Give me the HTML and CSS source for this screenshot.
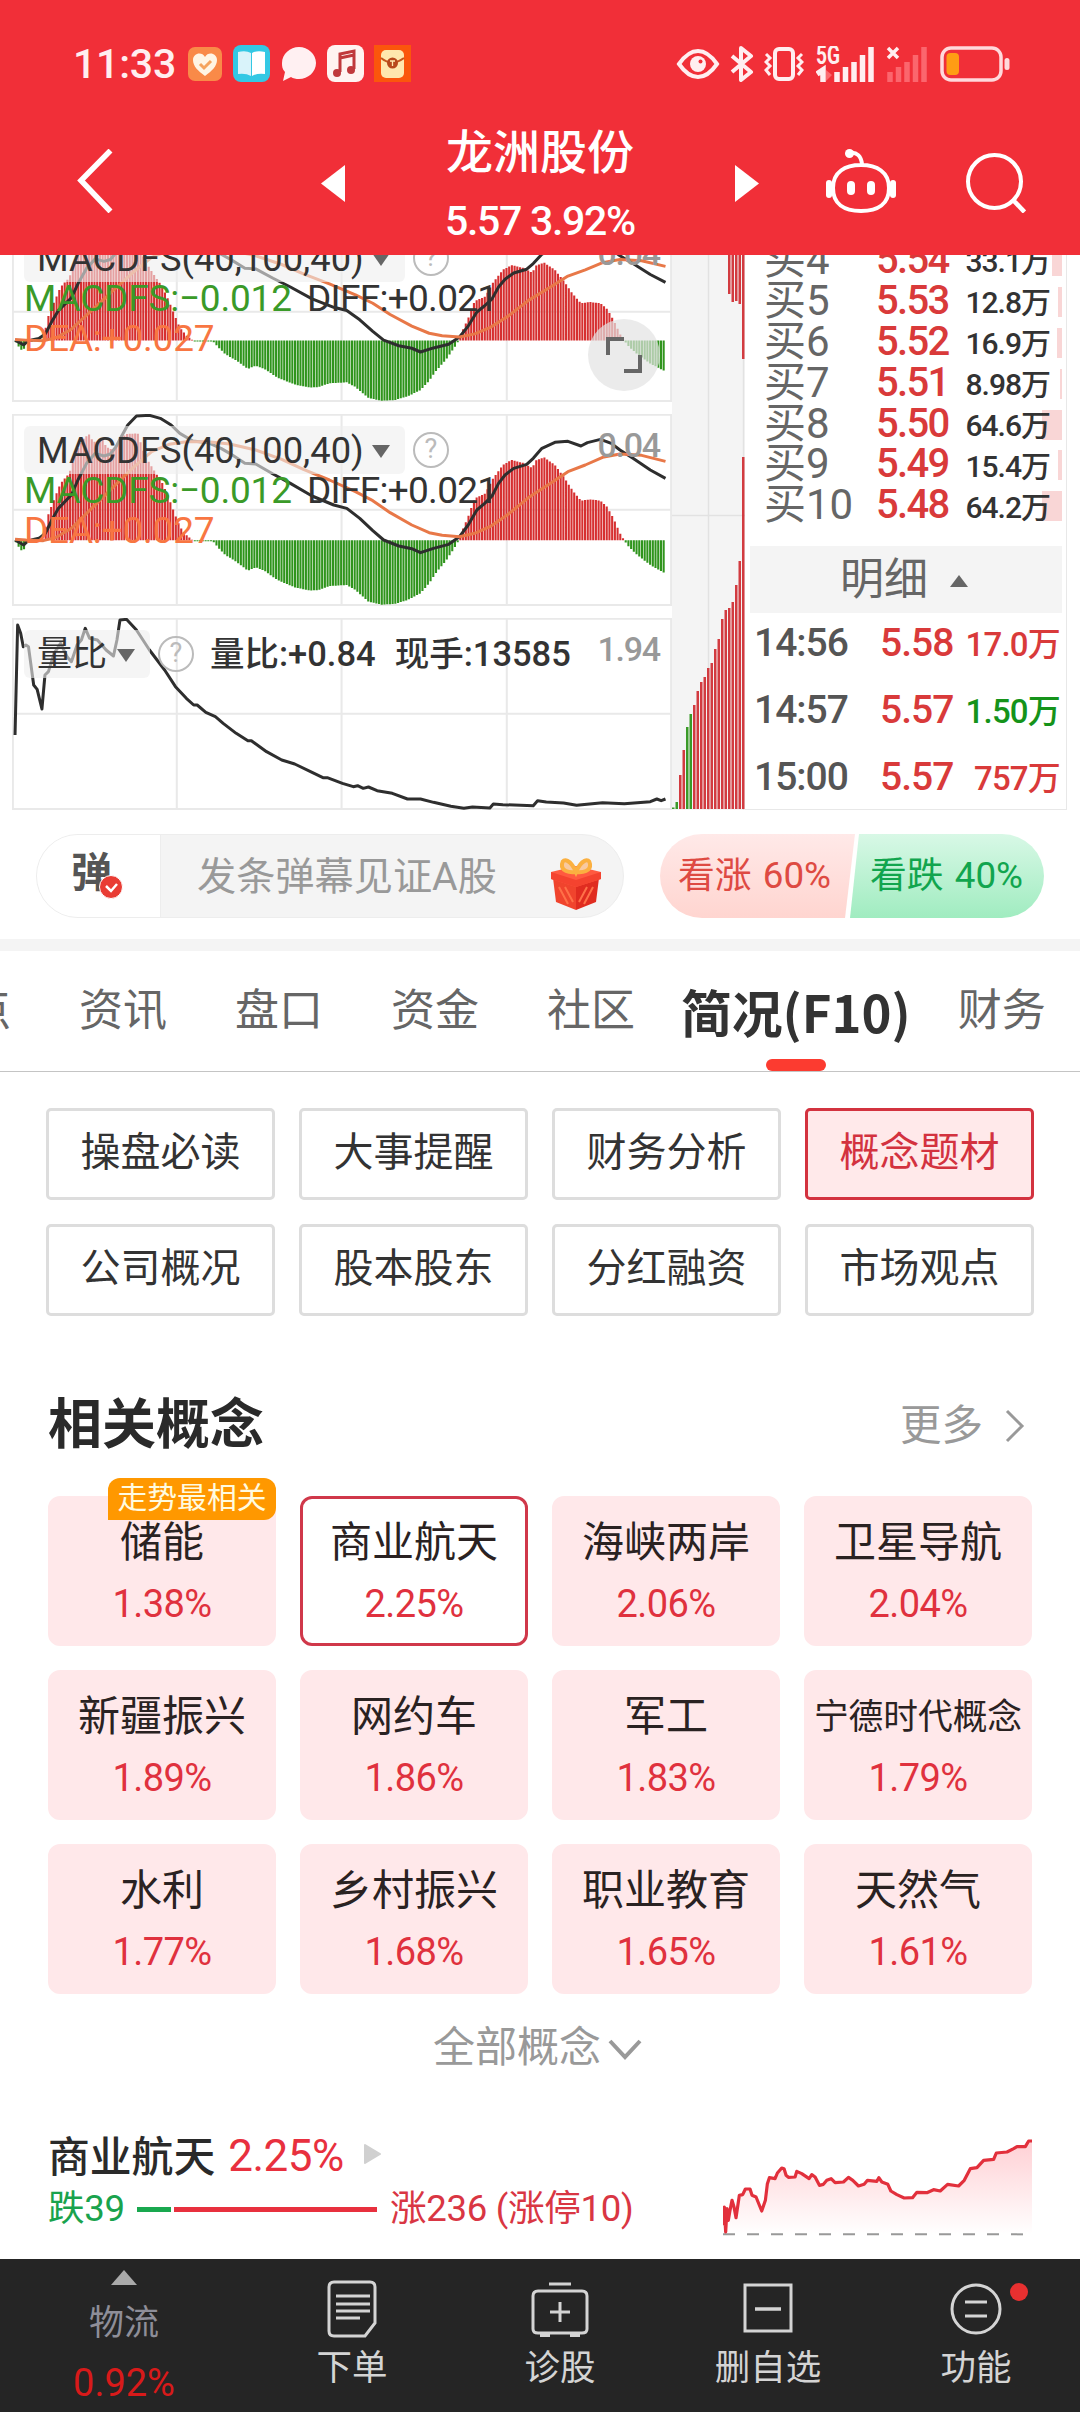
FILE: index.html
```html
<!DOCTYPE html>
<html lang="zh-CN">
<head>
  <meta charset="UTF-8">
  <meta name="viewport" content="width=device-width, initial-scale=1.0">
  <title>龙洲股份</title>
  <link rel="stylesheet" href="styles.css">
</head>
<body>
  <header class="header">
    <div class="status">
      <span class="clock">11:33</span>
      <svg class="app-heart" width="34" height="34" viewBox="0 0 34 34"><rect width="34" height="34" rx="7" fill="#f98a48"/><path d="M17 29C10 24 5 19 5 13c0-7 9-9 12-3 3-6 12-4 12 3 0 6-5 11-12 16z" fill="#fff5e4"/><path d="M12 17l4 4 7-7" fill="none" stroke="#f5a35c" stroke-width="3"/></svg>
      <svg class="app-book" width="37" height="37" viewBox="0 0 37 37"><rect width="37" height="37" rx="8" fill="#33c8e4"/><path d="M5 7q8-2 13 1v23q-5-3-13-2z" fill="#d9f3fa"/><path d="M32 7q-8-2-13 1v23q5-3 13-2z" fill="#fff"/></svg>
      <svg class="app-chat" width="36" height="36" viewBox="0 0 36 36"><path d="M18 1c9 0 17 7 17 16s-8 16-17 16c-3 0-6-.5-8-2l-8 4 2-9C1 23 1 20 1 17 1 8 9 1 18 1z" fill="#fff0f2"/></svg>
      <svg class="app-music" width="37" height="37" viewBox="0 0 37 37"><rect width="37" height="37" rx="8" fill="#fff3f1"/><path d="M13 27V9l14-3v18M13 13l14-3" fill="none" stroke="#c0393c" stroke-width="3"/><circle cx="10" cy="28" r="4" fill="#c0393c"/><circle cx="24" cy="25" r="4" fill="#c0393c"/></svg>
      <svg width="37" height="37" viewBox="0 0 37 37"><rect width="37" height="37" fill="#fb560c"/><rect x="7" y="5" width="23" height="28" rx="5" fill="#ffe7ae"/><path d="M7 13q11 9 23 0" fill="none" stroke="#c4561c" stroke-width="2"/><circle cx="18.500" cy="18" r="5.500" fill="#b8481b"/><path d="M16 16h5M18.500 16v5" stroke="#ffe7ae" stroke-width="1.300"/></svg>
      <div class="system">
        <svg width="44" height="36" viewBox="0 0 44 36"><path d="M3 18Q12 5 22 5t19 13Q32 31 22 31T3 18z" fill="none" stroke="#ffeef0" stroke-width="4"/><circle cx="22" cy="18" r="8" fill="#ffeef0"/><circle cx="24.500" cy="15.500" r="2" fill="#f12f38"/></svg>
        <svg class="bt" width="24" height="36" viewBox="0 0 24 36"><path d="M2 10l19 16-10 8V2l10 8L2 26" fill="none" stroke="#ffeef0" stroke-width="4" stroke-linejoin="round"/></svg>
        <svg class="vib" width="40" height="36" viewBox="0 0 40 36"><rect x="11" y="3" width="18" height="30" rx="4" fill="none" stroke="#ffeef0" stroke-width="4"/><path d="M2 8l4 4-4 4 4 4-4 4 4 5M38 8l-4 4 4 4-4 4 4 4-4 5" fill="none" stroke="#ffeef0" stroke-width="3"/></svg>
        <svg class="sig" width="59" height="36" viewBox="0 0 59 36"><text x="0" y="18" class="sig-text" textLength="24" lengthAdjust="spacingAndGlyphs">5G</text><path d="M1 28l6-4v12M21 26v10M29.500 21v15M38 16v20M46.500 9v27M55 1v35" fill="none" stroke="#ffeef0" stroke-width="5.500"/><path d="M10 24l6 5-6 6z" fill="#fb6a70"/></svg>
        <svg class="sig2" width="42" height="36" viewBox="0 0 42 36"><path d="M2 2l10 10M12 2L2 12" stroke="#ffeef0" stroke-width="3.500"/><path d="M4 26v10M12.500 21v15M21 16v20M29.500 9v27M38 1v35" stroke="#fb666d" stroke-width="5.500"/></svg>
        <svg class="bat" width="70" height="36" viewBox="0 0 70 36"><rect x="2" y="2" width="59" height="32" rx="9" fill="none" stroke="#ffd9dc" stroke-width="3.500"/><rect x="6.500" y="7" width="12.500" height="22" rx="4" fill="#ff9c14"/><rect x="64.500" y="12" width="5" height="12" rx="2.500" fill="#ffd9dc"/></svg>
      </div>
    </div>
    <nav class="nav">
      <svg class="back" width="36" height="64" viewBox="0 0 36 64"><path d="M33.500 1.500L4 31.500l29.500 31" fill="none" stroke="#fff" stroke-width="5.500"/></svg>
      <svg class="prev" width="24" height="37" viewBox="0 0 24 37"><path d="M24 0v37L0 18.500z" fill="#fff"/></svg>
      <div class="stock">
        <div class="stock-name">龙洲股份</div>
        <div class="stock-price">5.57 3.92%</div>
      </div>
      <svg class="next" width="24" height="37" viewBox="0 0 24 37"><path d="M0 0v37l24-18.500z" fill="#fff"/></svg>
      <svg class="robot" width="70" height="64" viewBox="0 0 70 64"><path d="M35 16C51 16 63 23 63 39S52 62 35 62 7 55 7 39s12-23 28-23zM24 4c7-1 11 3 12 11" fill="none" stroke="#fff" stroke-width="4"/><circle cx="23.500" cy="4.500" r="4.500" fill="#fff"/><rect x="0" y="31" width="6" height="18" rx="3" fill="#fff"/><rect x="64" y="31" width="6" height="18" rx="3" fill="#fff"/><rect x="21" y="32" width="8" height="14" rx="4" fill="#fff"/><rect x="41" y="32" width="8" height="14" rx="4" fill="#fff"/></svg>
      <svg class="search" width="60" height="61" viewBox="0 0 60 61"><circle cx="28.500" cy="29.500" r="26.500" fill="none" stroke="#fff" stroke-width="4"/><path d="M47.500 48.500l11 11.500" stroke="#fff" stroke-width="4.500"/></svg>
    </nav>
  </header>

  <section class="market">
    <div class="charts">
      <div class="chart chart-top">
        <svg class="plot macd" viewBox="28 492 1522 576" preserveAspectRatio="none"></svg>
        <span class="scale">0.04</span>
        <div class="chart-head"><span class="chip">MACDFS(40,100,40)<i class="caret"></i></span><span class="help">?</span></div>
        <div class="values"><span class="green">MACDFS:−0.012</span><span class="diff">DIFF:+0.021</span></div>
        <div class="values orange">DEA:+0.027</div>
        <div class="expand"><svg width="36" height="36" viewBox="0 0 36 36"><path d="M2 18V2h16M34 18v16H18" fill="none" stroke="#666" stroke-width="4"/></svg></div>
      </div>
      <div class="chart">
        <svg class="plot macd" viewBox="28 492 1522 576" preserveAspectRatio="none"></svg>
        <span class="scale">0.04</span>
        <div class="chart-head"><span class="chip">MACDFS(40,100,40)<i class="caret"></i></span><span class="help">?</span></div>
        <div class="values"><span class="green">MACDFS:−0.012</span><span class="diff">DIFF:+0.021</span></div>
        <div class="values orange">DEA:+0.027</div>
      </div>
      <div class="chart">
        <svg class="plot ratio" viewBox="28 54 1522 576" preserveAspectRatio="none"></svg>
        <span class="scale">1.94</span>
        <div class="chart-head ratio-head"><span class="chip chip-ratio">量比<i class="caret"></i></span><span class="help">?</span><span class="ratio-val">量比:+0.84</span><span class="ratio-val hand">现手:13585</span></div>
      </div>
    </div>
    <svg class="profile" width="73" height="555" viewBox="0 0 73 555"></svg>
    <div class="quotes">
      <ul class="bids" id="bids"></ul>
      <div class="detail-head">明细<i class="up"></i></div>
      <div class="tick"><span>14:56</span><b>5.58</b><em>17.0万</em></div>
      <div class="tick"><span>14:57</span><b>5.57</b><em class="down">1.50万</em></div>
      <div class="tick"><span>15:00</span><b>5.57</b><em>757万</em></div>
    </div>
  </section>

  <section class="barrage">
    <div class="barrage-box">
      <div class="barrage-switch">弹<svg class="check" width="24" height="24" viewBox="0 0 24 24"><circle cx="12" cy="12" r="11.500" fill="#e93c34" stroke="#fff"/><path d="M7 11l5 5 6-7" fill="none" stroke="#fff" stroke-width="2.500"/></svg></div>
      <div class="barrage-input">
        <span>发条弹幕见证A股</span>
        <svg width="50" height="54" viewBox="0 0 50 54"><path d="M2 21l23 7v25L5 45z" fill="#f0442d"/><path d="M48 21l-23 7v25l20-8z" fill="#e02c20"/><path d="M0 15l25-6 25 6v7l-25 8-25-8z" fill="#ff5a40"/><path d="M0 15l25 8 25-8v7l-25 8-25-8z" fill="#f4432f"/><path d="M8 30l9 17M14 30l8 15M42 30l-9 17M36 30l-8 15" stroke="#ff7048" stroke-width="2"/><path d="M25 15C20 3 12 0 11 7s7 9 14 8c7 1 15-1 14-8S30 3 25 15z" fill="#f8c9a0" stroke="#fbb040" stroke-width="4"/></svg>
      </div>
    </div>
    <div class="votes">
      <div class="vote vote-up">看涨 60%</div>
      <div class="vote vote-down">看跌 40%</div>
    </div>
  </section>

  <nav class="tabs">
    <span>看点</span><span>资讯</span><span>盘口</span><span>资金</span><span>社区</span><span class="active">简况(F10)</span><span>财务</span>
  </nav>

  <div class="links">
    <a>操盘必读</a><a>大事提醒</a><a>财务分析</a><a class="active">概念题材</a>
    <a>公司概况</a><a>股本股东</a><a>分红融资</a><a>市场观点</a>
  </div>

  <div class="title-row">
    <h2>相关概念</h2>
    <span class="more">更多<svg width="20" height="34" viewBox="0 0 20 34"><path d="M2 2l15 15L2 32" fill="none" stroke="#999" stroke-width="3"/></svg></span>
  </div>

  <div class="concepts">
    <div class="card"><span class="tag">走势最相关</span><p>储能</p><b>1.38%</b></div>
    <div class="card selected"><p>商业航天</p><b>2.25%</b></div>
    <div class="card"><p>海峡两岸</p><b>2.06%</b></div>
    <div class="card"><p>卫星导航</p><b>2.04%</b></div>
    <div class="card"><p>新疆振兴</p><b>1.89%</b></div>
    <div class="card"><p>网约车</p><b>1.86%</b></div>
    <div class="card"><p>军工</p><b>1.83%</b></div>
    <div class="card"><p class="long">宁德时代概念</p><b>1.79%</b></div>
    <div class="card"><p>水利</p><b>1.77%</b></div>
    <div class="card"><p>乡村振兴</p><b>1.68%</b></div>
    <div class="card"><p>职业教育</p><b>1.65%</b></div>
    <div class="card"><p>天然气</p><b>1.61%</b></div>
  </div>

  <div class="all">全部概念<svg width="34" height="22" viewBox="0 0 34 22"><path d="M2 2l15 16L32 2" fill="none" stroke="#999" stroke-width="4"/></svg></div>

  <section class="sector">
    <div class="sector-info">
      <div class="sector-name">商业航天<b>2.25%</b><svg width="17" height="20" viewBox="0 0 17 20"><path d="M1 1l15 9-15 9z" fill="#d0d0d0" stroke="#d0d0d0" stroke-linejoin="round" stroke-width="2"/></svg></div>
      <div class="sector-count"><span class="fall">跌39</span><i class="bar-fall"></i><i class="bar-rise"></i><span class="rise">涨236 (涨停10)</span></div>
    </div>
    <svg class="spark" width="309" height="100" viewBox="189 470 926 300" preserveAspectRatio="none"></svg>
  </section>

  <footer class="footer">
    <div class="index"><i class="up"></i><span>物流</span><b>0.92%</b></div>
    <div class="tool"><svg width="60" height="58" viewBox="0 0 60 58"><path d="M12 2h36q5 0 5 5v36L43 56H12q-5 0-5-5V7q0-5 5-5zM14 16h34M14 24h34M14 31h34M14 38h24" fill="none" stroke="#d4d4d4" stroke-width="3"/></svg>下单</div>
    <div class="tool"><svg width="60" height="58" viewBox="0 0 60 58"><path d="M8 11h44q5 0 5 5v33q0 4-5 4H8q-5 0-5-4V16q0-5 5-5zM19 4h22M30 22v20M20 32h20" fill="none" stroke="#d4d4d4" stroke-width="3"/><path d="M10 54h10v3H10zM40 54h10v3H40z" fill="#d4d4d4"/></svg>诊股</div>
    <div class="tool"><svg width="60" height="58" viewBox="0 0 60 58"><rect x="7" y="5" width="46" height="46" fill="none" stroke="#d4d4d4" stroke-width="3"/><path d="M17 29h26" stroke="#d4d4d4" stroke-width="3.500"/></svg>删自选</div>
    <div class="tool"><svg width="60" height="58" viewBox="0 0 60 58"><circle cx="30" cy="29" r="24" fill="none" stroke="#d4d4d4" stroke-width="3"/><path d="M19 22h22M19 36h22" stroke="#d4d4d4" stroke-width="3"/></svg>功能<i class="dot"></i></div>
  </footer>

  <script src="script.js"></script>
</body>
</html>
```
FILE: styles.css
```css
* {
  box-sizing: border-box;
}
body {
  margin: 0;
  width: 1080px;
  height: 2412px;
  overflow: hidden;
  background: #fff;
  color: #333;
  font-family: Roboto, "Noto Sans CJK SC", sans-serif;
}
p, h2, ul {
  margin: 0;
  padding: 0;
  list-style: none;
}
b, i, em {
  font-style: normal;
  font-weight: 400;
}
svg {
  display: block;
  flex: none;
}

/* Header */
.header {
  height: 255px;
  background: #f12f38;
  color: #fff;
}
.status {
  display: flex;
  align-items: center;
  height: 122px;
  padding: 5px 70px 0 73px;
}
.clock {
  width: 103px;
  margin-right: 12px;
  font-size: 41px;
  font-weight: 500;
  letter-spacing: -0.2px;
  line-height: 40px;
  color: #ffeef0;
}
.app-heart {
  margin-right: 11px;
}
.app-book {
  margin-right: 11px;
}
.app-chat {
  margin-right: 10px;
}
.app-music {
  margin-right: 10px;
}
.system {
  display: flex;
  margin-left: auto;
}
.bt {
  margin-left: 10px;
}
.vib {
  margin-left: 10px;
}
.sig {
  margin-left: 12px;
}
.sig-text {
  font-size: 25px;
  font-weight: 700;
  fill: #ffeef0;
}
.sig2 {
  margin-left: 11px;
}
.bat {
  margin-left: 12px;
}
.nav {
  display: flex;
  align-items: center;
  height: 133px;
  padding-bottom: 15px;
}
.back {
  margin-left: 77px;
}
.prev {
  margin: 4px 0 0 208px;
}
.next {
  margin-top: 4px;
}
.stock {
  align-self: flex-start;
  width: 390px;
  text-align: center;
}
.stock-name {
  font-size: 47px;
  font-weight: 500;
  line-height: 62px;
}
.stock-price {
  margin-top: 8px;
  font-size: 41px;
  font-weight: 500;
  letter-spacing: -1.3px;
  line-height: 58px;
}
.robot {
  margin-left: 67px;
}
.search {
  margin: 3px 0 0 70px;
}

/* Charts and order book */
.market {
  display: flex;
  height: 555px;
  overflow: hidden;
}
.charts {
  width: 660px;
  margin-left: 12px;
}
.chart {
  position: relative;
  height: 192px;
  margin-bottom: 12px;
}
.chart-top {
  height: 180px;
  margin-top: -33px;
}
.plot {
  position: absolute;
  width: 660px;
  height: 100%;
}
.plot * {
  vector-effect: non-scaling-stroke;
}
.scale {
  position: absolute;
  top: 11px;
  right: 12px;
  font-size: 34px;
  font-weight: 500;
  line-height: 40px;
  letter-spacing: -1.2px;
  color: #999;
}
.chart-head {
  position: relative;
  display: flex;
  align-items: center;
  padding: 12px 0 0 12px;
}
.chip {
  display: flex;
  align-items: center;
  justify-content: space-between;
  width: 381px;
  height: 48px;
  padding: 2px 15px 0 13px;
  border-radius: 6px;
  background: rgba(238, 238, 238, 0.6);
  font-size: 36.3px;
  line-height: 48px;
}
.caret {
  border: solid transparent;
  border-width: 13px 9px 0;
  border-top-color: #666;
}
.help {
  width: 36px;
  height: 36px;
  margin-left: 8px;
  border: 2.5px solid #bbb;
  border-radius: 50%;
  color: #bbb;
  font-size: 27px;
  line-height: 31px;
  text-align: center;
}
.values {
  position: relative;
  height: 40px;
  margin-top: -3px;
  padding-left: 12px;
  font-size: 37px;
  line-height: 40px;
  letter-spacing: -0.2px;
  white-space: nowrap;
}
.values + .values {
  margin-top: 0;
}
.green {
  display: inline-block;
  width: 283px;
  color: #3a9a28;
}
.diff {
  letter-spacing: -0.7px;
}
.orange {
  color: #f87642;
}
.expand {
  position: absolute;
  left: 576px;
  top: 97px;
  display: flex;
  align-items: center;
  justify-content: center;
  width: 72px;
  height: 72px;
  border-radius: 50%;
  background: rgba(226, 226, 226, 0.7);
}
.chip-ratio {
  width: 126px;
  font-size: 35px;
}
.ratio-val {
  margin-left: 16px;
  font-size: 34.5px;
  font-weight: 500;
  line-height: 48px;
}
.hand {
  margin-left: 19px;
}
.profile {
  background: #f4f4f4;
}
.quotes {
  width: 322px;
  padding: 0 4px 0 5px;
  border: solid #e8e8e8;
  border-width: 0 1px 1px 0;
}
.bids {
  height: 291px;
  padding-top: 2px;
  overflow: hidden;
}
.bids li {
  position: relative;
  display: flex;
  align-items: center;
  height: 40.9px;
  padding-left: 14px;
  line-height: 41px;
}
.bids li:first-child {
  margin-top: -18px;
}
.bids .level {
  width: 112px;
  font-size: 42px;
  color: #666;
}
.bids .price {
  width: 70px;
  font-size: 40px;
  font-weight: 500;
  color: #d93a3a;
  letter-spacing: -1.7px;
}
.bids .amount {
  position: relative;
  flex: 1;
  padding: 5px 12px 0 0;
  font-size: 30px;
  font-weight: 500;
  letter-spacing: -1px;
  text-align: right;
  white-space: nowrap;
}
.bids .depth {
  position: absolute;
  right: 0;
  top: 7px;
  height: 30px;
  background: #f9d6d6;
}
.detail-head {
  display: flex;
  align-items: center;
  justify-content: center;
  gap: 22px;
  height: 67px;
  padding: 2px 4px 0 0;
  background: #f4f4f4;
  color: #666;
  font-size: 44px;
  line-height: 65px;
}
.up {
  border: solid transparent;
  border-width: 0 9px 12px;
  border-bottom-color: #666;
}
.tick {
  display: flex;
  align-items: center;
  height: 67px;
  padding: 0 2px 7px 4px;
  font-size: 39px;
  line-height: 60px;
  white-space: nowrap;
}
.tick span {
  width: 126px;
  font-weight: 500;
  color: #555;
  letter-spacing: -1px;
}
.tick b {
  width: 72px;
  font-weight: 500;
  color: #d93a3a;
  letter-spacing: -1px;
}
.tick em {
  flex: 1;
  padding-top: 3px;
  font-size: 33px;
  font-weight: 500;
  letter-spacing: -0.8px;
  text-align: right;
  color: #d93a3a;
}
.tick .down {
  color: #15931a;
}

/* Barrage */
.barrage {
  display: flex;
  height: 141px;
  padding: 24px 36px 21px;
  border-bottom: 12px solid #f4f4f4;
}
.barrage-box {
  display: flex;
  width: 588px;
  height: 84px;
  border: 1px solid #ededed;
  border-radius: 42px;
  background: #f4f4f4;
  overflow: hidden;
}
.barrage-switch {
  position: relative;
  width: 124px;
  padding-left: 34px;
  border-right: 1px solid #ededed;
  background: #fff;
  color: #555;
  font-size: 41px;
  font-weight: 700;
  line-height: 77px;
}
.check {
  position: absolute;
  left: 62px;
  top: 40px;
}
.barrage-input {
  display: flex;
  flex: 1;
  align-items: center;
  justify-content: space-between;
  padding: 0 22px 0 36px;
  color: #999;
  font-size: 39.2px;
  line-height: 84px;
}
.barrage-input span {
  padding-top: 2px;
}
.barrage-input svg {
  margin-top: 16px;
}
.votes {
  display: flex;
  margin-left: 36px;
}
.vote {
  height: 84px;
  font-size: 36.8px;
  line-height: 83px;
  white-space: nowrap;
  word-spacing: 2px;
}
.vote-up {
  width: 195px;
  padding-left: 18px;
  border-radius: 42px 0 0 42px;
  background: linear-gradient(#ffe9e8, #ffd5d0);
  clip-path: polygon(0 0, 100% 0, 185px 100%, 0 100%);
  color: #de4a42;
}
.vote-down {
  width: 194px;
  margin-left: -5px;
  padding-left: 20px;
  border-radius: 0 42px 42px 0;
  background: linear-gradient(#d8f8e6, #a0ecc0);
  clip-path: polygon(9px 0, 100% 0, 100% 100%, 0 100%);
  color: #11a54e;
}

/* Tabs */
.tabs {
  display: flex;
  align-items: center;
  gap: 68px;
  height: 121px;
  margin-left: -77px;
  border-bottom: 1px solid #c4c4c4;
  color: #666;
  font-size: 44px;
  line-height: 120px;
  white-space: nowrap;
}
.tabs .active {
  position: relative;
  margin: 0 -21px 0 -22px;
  font-family: "Noto Sans CJK SC", sans-serif;
  font-size: 50.8px;
  font-weight: 700;
  line-height: 114px;
  color: #333;
}
.tabs .active::after {
  content: "";
  position: absolute;
  left: calc(50% - 30px);
  bottom: -3px;
  width: 60px;
  height: 12px;
  border-radius: 6px;
  background: #fc3b30;
}

/* Section links */
.links {
  display: grid;
  grid-template-columns: repeat(4, 229px);
  gap: 24px;
  padding: 36px 46px 0;
}
.links a {
  height: 92px;
  border: 3px solid #ddd;
  border-radius: 5px;
  font-size: 40px;
  line-height: 84px;
  text-align: center;
}
.links .active {
  border-color: #d3323f;
  background: #ffe9ea;
  color: #d3323f;
}

/* Concepts */
.title-row {
  display: flex;
  align-items: center;
  justify-content: space-between;
  height: 80px;
  margin-top: 70px;
  padding: 0 55px 0 48px;
}
h2 {
  font-size: 54px;
  font-weight: 700;
  line-height: 80px;
  color: #2a2a2a;
}
.more {
  display: flex;
  align-items: center;
  gap: 22px;
  font-size: 41.5px;
  line-height: 80px;
  color: #999;
}
.concepts {
  display: grid;
  grid-template-columns: repeat(4, 228px);
  gap: 24px;
  padding: 30px 48px 0;
}
.card {
  position: relative;
  height: 150px;
  border: 3px solid #ffe8ea;
  border-radius: 12px;
  background: #ffe8ea;
  text-align: center;
}
.card p {
  margin-top: 13px;
  font-size: 42px;
  line-height: 62px;
  color: #2a2222;
  white-space: nowrap;
}
.card .long {
  font-size: 34.7px;
}
.card b {
  display: block;
  font-size: 38px;
  line-height: 61px;
  letter-spacing: -0.6px;
  color: #e0313e;
}
.selected {
  border-color: #d0384a;
  background: #fff;
}
.tag {
  position: absolute;
  top: -21px;
  right: -3px;
  width: 168px;
  height: 42px;
  border-radius: 12px 12px 12px 0;
  background: #ff9800;
  color: #fffbe0;
  font-size: 29.8px;
  line-height: 39px;
}
.all {
  display: flex;
  align-items: center;
  gap: 7px;
  height: 80px;
  margin-top: 14px;
  padding-left: 433px;
  font-size: 42px;
  line-height: 80px;
  color: #999;
}
.all svg {
  margin-top: 4px;
}

/* Selected sector */
.sector {
  display: flex;
  justify-content: space-between;
  height: 171px;
  padding: 33px 48px 0;
}
.sector-name {
  display: flex;
  align-items: center;
  height: 66px;
  font-size: 41.8px;
  font-weight: 500;
  color: #2a2a2a;
}
.sector-name b {
  margin: 3px 20px 0 13px;
  font-size: 44px;
  letter-spacing: -0.5px;
  color: #e8303e;
}
.sector-count {
  display: flex;
  align-items: center;
  height: 44px;
  font-size: 36.6px;
  line-height: 44px;
  letter-spacing: -0.3px;
  white-space: nowrap;
}
.fall {
  width: 89px;
  color: #19a34d;
}
.bar-fall {
  width: 34px;
  height: 5px;
  margin-right: 3px;
  background: #19a84f;
}
.bar-rise {
  width: 203px;
  height: 5px;
  margin-right: 13px;
  background: #e8303e;
}
.rise {
  color: #d93643;
}
.spark {
  margin-top: 16px;
}
.spark * {
  vector-effect: non-scaling-stroke;
}

/* Bottom toolbar */
.footer {
  display: flex;
  height: 153px;
  background: #252525;
}
.index {
  display: flex;
  flex-direction: column;
  align-items: center;
  width: 248px;
  padding-top: 11px;
  font-size: 35px;
  color: #8e8e98;
}
.index .up {
  border-width: 0 13px 15px;
  border-bottom-color: #aaa;
}
.index span {
  margin-top: 9px;
  line-height: 60px;
}
.index b {
  margin-top: -1px;
  font-size: 38px;
  line-height: 60px;
  color: #d81a1a;
}
.tool {
  position: relative;
  display: flex;
  flex: 1;
  flex-direction: column;
  align-items: center;
  padding-top: 21px;
  color: #d4d4d4;
  font-size: 35.5px;
  line-height: 60px;
}
.dot {
  position: absolute;
  left: 138px;
  top: 24px;
  width: 18px;
  height: 18px;
  border-radius: 50%;
  background: #e83030;
}
```
FILE: script.js
```js
const diffLine = "35,870 55,885 65,872 90,865 105,850 120,810 135,775 150,755 165,735 180,690 200,640 220,610 240,618 255,612 268,590 280,560 295,525 315,498 345,496 370,505 395,525 415,550 445,573 480,578 510,595 530,610 565,640 590,642 630,672 670,700 720,738 770,765 800,775 830,805 860,842 885,870 920,888 950,896 970,908 1000,895 1035,883 1060,860 1080,825 1100,780 1118,760 1135,738 1150,700 1165,675 1185,655 1215,643 1230,625 1250,595 1280,577 1310,574 1340,588 1355,578 1385,568 1410,580 1430,600 1460,625 1500,660 1535,685";
const deaLine = "35,868 60,870 100,872 130,862 165,835 200,790 235,745 270,700 310,650 350,605 390,583 430,575 480,575 530,582 590,600 650,628 700,658 760,690 820,725 860,752 900,788 950,825 990,848 1020,856 1060,860 1095,850 1130,830 1170,795 1220,742 1270,700 1310,665 1350,645 1390,622 1430,612 1480,616 1535,634";
const histogram = "35,871 40,885 54,908 58,885 65,875 68,871 100,871 110,800 120,765 140,700 160,670 175,610 190,570 205,552 215,575 225,575 235,560 245,590 260,600 275,575 290,552 318,550 330,600 345,640 360,670 375,700 390,745 400,780 415,830 430,855 445,871 490,872 505,895 520,915 545,935 572,962 590,952 610,962 640,990 680,1012 715,1022 735,1020 760,1008 800,1005 820,1020 850,1055 880,1064 910,1062 940,1050 970,1030 990,1000 1005,970 1030,930 1055,880 1057,871 1060,860 1080,800 1095,745 1120,730 1135,690 1160,645 1180,630 1210,640 1228,655 1235,632 1255,622 1280,645 1300,680 1320,720 1340,752 1360,748 1385,752 1400,770 1415,805 1430,850 1440,871 1450,890 1470,915 1500,945 1537,972";
const ratioLine = "35,405 41,75 48,100 54,140 60,135 66,140 78,255 86,268 97,327 104,225 112,215 125,160 140,130 155,170 165,185 178,135 188,120 197,85 207,115 225,120 245,150 262,168 270,120 277,60 292,58 315,90 345,150 380,210 405,260 430,295 447,315 455,315 475,337 497,350 515,370 545,400 572,422 580,422 615,455 650,480 680,492 720,517 745,533 755,533 790,550 815,560 825,557 838,565 850,561 870,572 905,580 940,597 970,597 1000,607 1040,619 1070,625 1090,621 1130,624 1138,612 1160,614 1230,617 1240,602 1260,606 1300,609 1330,616 1390,608 1440,611 1500,605 1515,597 1525,602 1535,597";
const sparkLine = "190,735 193,680 197,755 201,685 205,720 210,690 216,660 222,680 228,712 238,645 248,643 256,626 270,626 276,645 288,650 305,692 316,660 322,610 328,592 345,595 352,578 365,563 372,565 378,585 385,591 405,590 410,573 425,580 447,595 455,583 465,590 478,615 490,612 500,600 513,595 525,607 550,605 565,591 578,600 595,617 612,612 622,600 650,603 656,592 665,605 683,612 692,632 710,643 732,653 757,652 770,636 800,637 820,628 840,632 862,612 895,617 912,600 930,565 950,562 970,540 1000,537 1008,518 1040,515 1060,505 1070,499 1095,499 1105,482 1115,482";

function line(points, color, width) {
  return `<polyline points="${points}" fill="none" stroke="${color}" stroke-width="${width}" stroke-linejoin="round"/>`;
}

// Frame, centre line and three time divisions
function grid(top) {
  return `<path d="M30 ${top + 2}H1548V${top + 573}H30zM30 ${top + 287}H1548M408 ${top}v575M788 ${top}v575M1169 ${top}v575" fill="none" stroke="#e9e9e9" stroke-width="2"/>`;
}

function valueAt(points, x) {
  for (let i = 1; i < points.length; i++) {
    if (x <= points[i][0]) {
      const [x1, y1] = points[i - 1];
      const [x2, y2] = points[i];
      return y1 + (y2 - y1) * (x - x1) / (x2 - x1);
    }
  }
  return points[points.length - 1][1];
}

const zero = 871;
const shape = histogram.split(" ").map(p => p.split(",").map(Number));
let up = "", down = "";
for (let x = 37; x < 1537; x += 6.25) {
  const y = valueAt(shape, x).toFixed(1);
  if (y < zero) up += `M${x} ${zero}V${y}`;
  else down += `M${x} ${zero}V${Math.max(y, zero + 3)}`;
}
document.querySelectorAll(".macd").forEach(svg => {
  svg.innerHTML = grid(492)
    + `<path d="${up}" stroke="#d62f30" stroke-width="2.1"/><path d="${down}" stroke="#2f941c" stroke-width="2.1"/>`
    + line(diffLine, "#2e2e2e", 3) + line(deaLine, "#e87848", 3);
});
document.querySelector(".ratio").innerHTML = grid(54) + line(ratioLine, "#2e2e2e", 3);

// Turnover by price
const volumes = [1.5, 7, 34, 59, 82, 95, 104, 118, 127, 132, 141, 146, 160, 170, 190, 199, 201, 207, 224, 248, 352];
const falling = [0, 1, 4, 5];
let bars = '<path d="M36.500 0V555M71.500 0V555M0 260.500H73" stroke="#e2e2e2" stroke-width="1.500"/>';
volumes.forEach((h, i) => {
  bars += `<rect x="${i * 3.5}" y="${554 - h}" width="2.500" height="${h}" fill="${falling.includes(i) ? "#3a9a28" : "#d23b40"}"/>`;
});
[39, 47, 46, 49, 104].forEach((h, i) => {
  bars += `<rect x="${56 + i * 3.5}" y="0" width="2.500" height="${h}" fill="#d23b40"/>`;
});
document.querySelector(".profile").innerHTML = bars;

document.querySelector(".spark").innerHTML =
  '<defs><linearGradient id="fade" x1="0" y1="0" x2="0" y2="1"><stop offset="0" stop-color="#ffd0d4"/><stop offset="1" stop-color="#fff"/></linearGradient></defs>'
  + `<polygon points="190,762 ${sparkLine} 1115,762" fill="url(#fade)"/>`
  + '<path d="M189 762H1110" stroke="#999" stroke-width="2" stroke-dasharray="12 12"/>'
  + line(sparkLine, "#e2303c", 3.2);

const bids = [
  ["买4", "5.54", "33.1万", 10], ["买5", "5.53", "12.8万", 4], ["买6", "5.52", "16.9万", 5],
  ["买7", "5.51", "8.98万", 2], ["买8", "5.50", "64.6万", 20], ["买9", "5.49", "15.4万", 4],
  ["买10", "5.48", "64.2万", 20]
];
document.getElementById("bids").innerHTML = bids.map(([level, price, amount, depth]) =>
  `<li><i class="depth" style="width:${depth}px"></i><span class="level">${level}</span><span class="price">${price}</span><span class="amount">${amount}</span></li>`
).join("");
```
